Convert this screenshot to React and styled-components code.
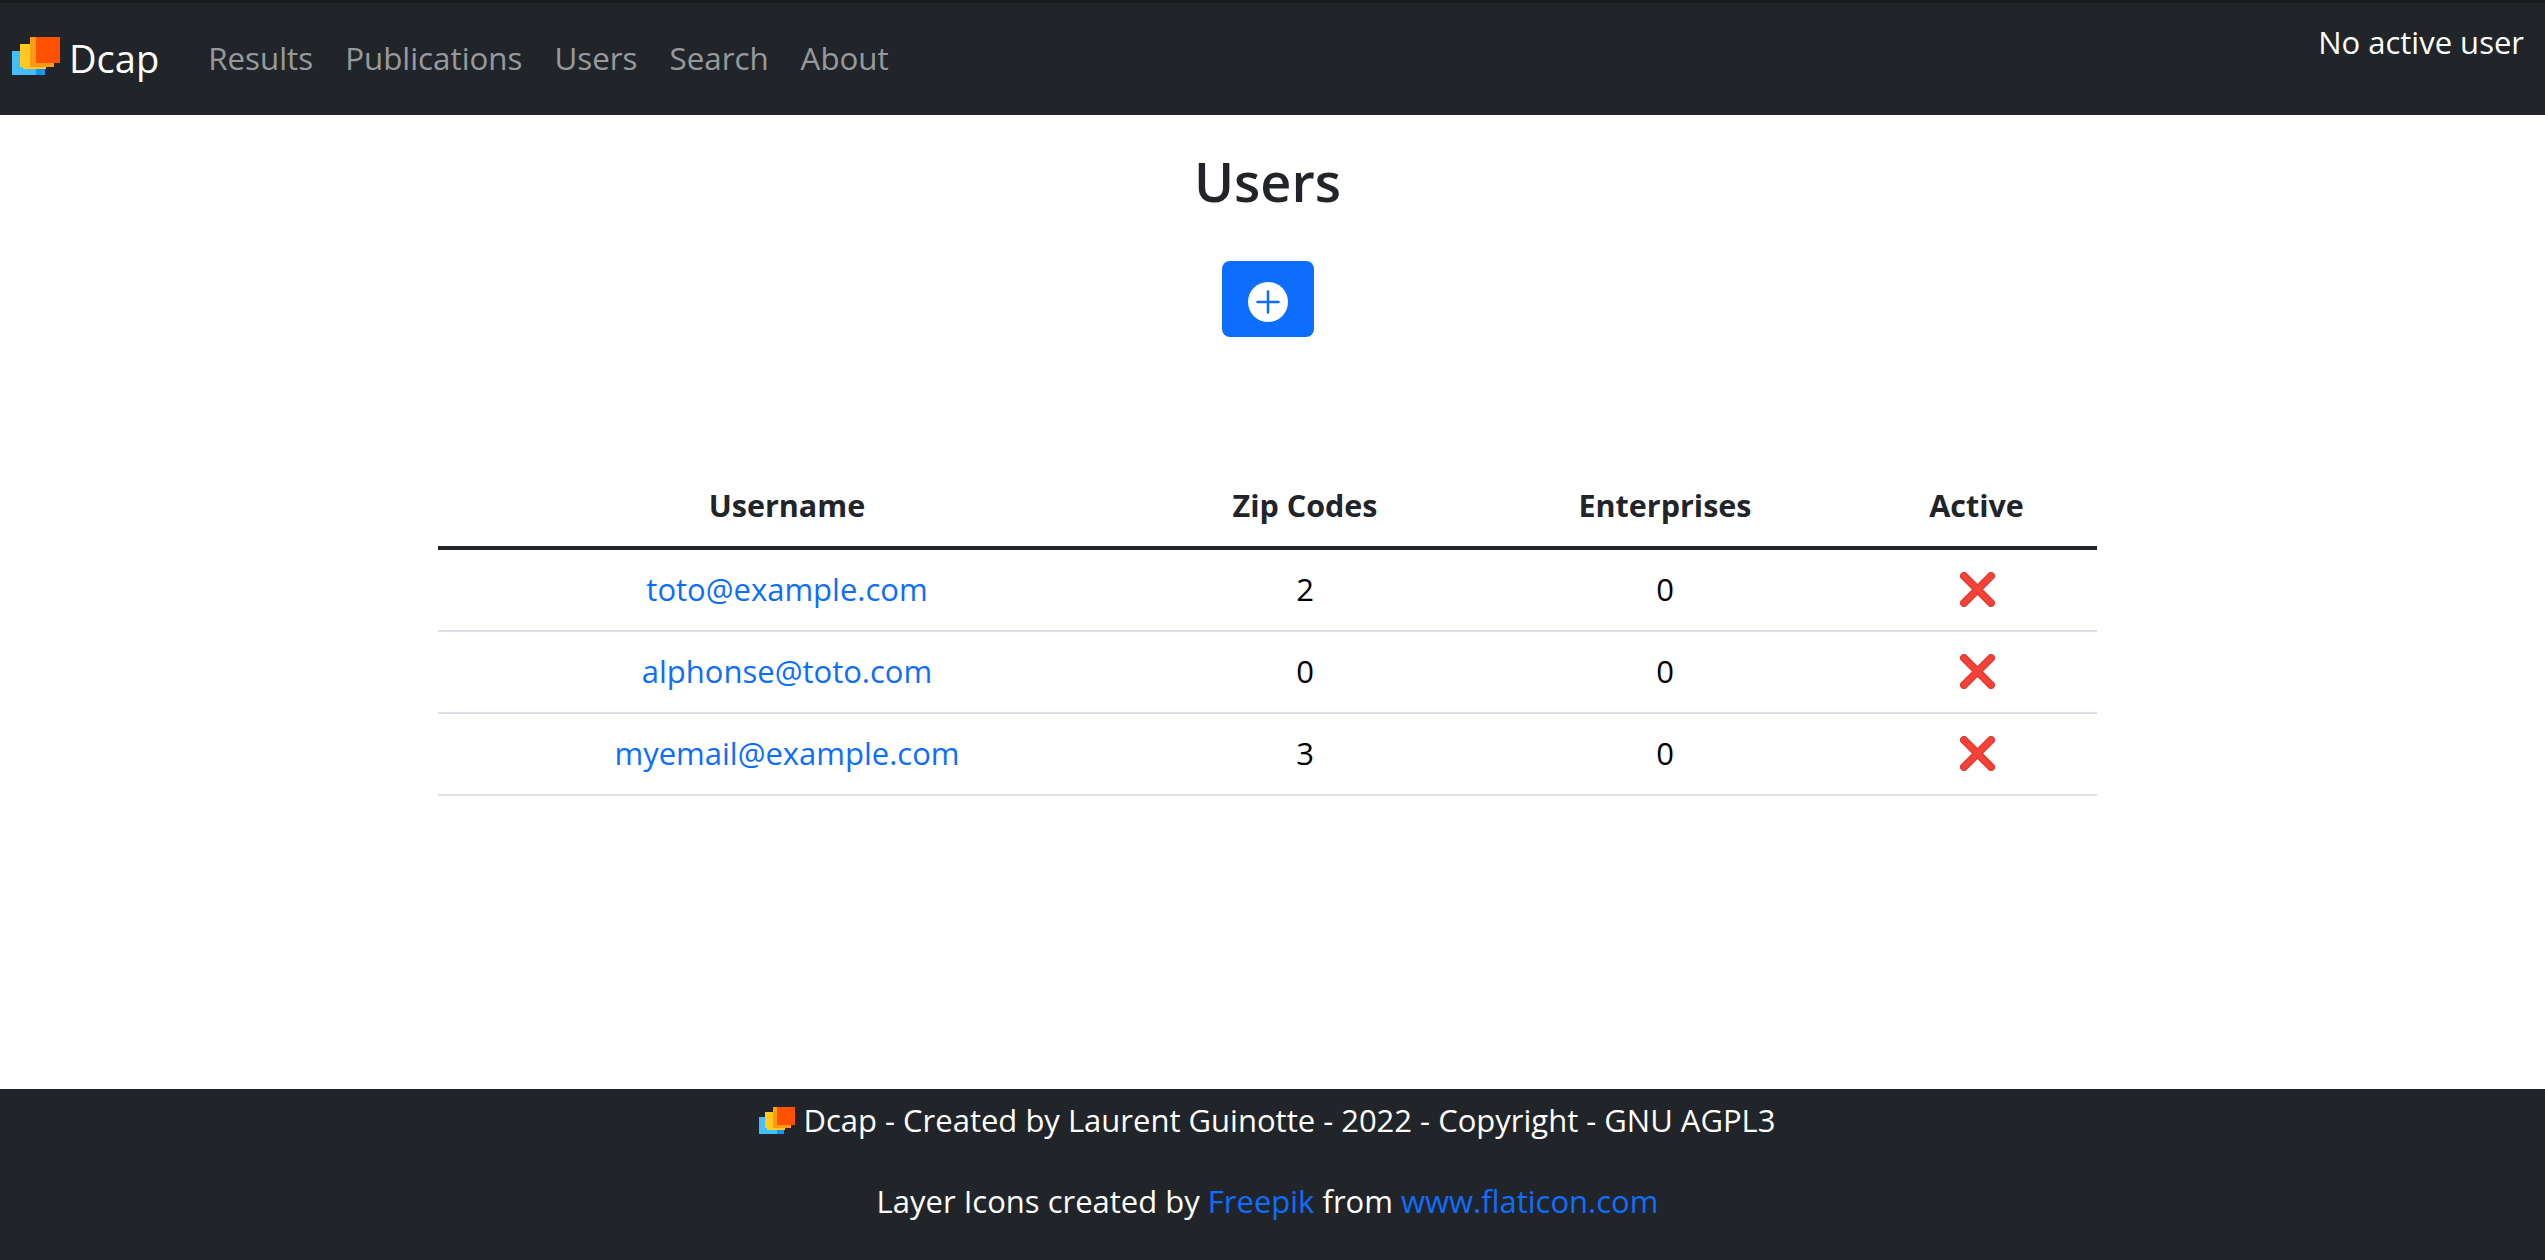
import React from "react";
import styled, { createGlobalStyle } from "styled-components";

const Global = createGlobalStyle`
  html, body { margin: 0; padding: 0; background: #fff; }
  body { font-family: "Open Sans", "Noto Sans", sans-serif; font-size: 31px; line-height: 48px; color: #212529; }
  #root { height: 1260px; display: flex; flex-direction: column; overflow: hidden; }
  a { text-decoration: none; }
`;

const Navbar = styled.nav`
  height: 115px; box-sizing: border-box; flex: none;
  background: #212529; border-top: 3px solid #1a1b1c;
  display: flex; align-items: flex-start; justify-content: space-between;
`;
const NavLeft = styled.div`display: flex; align-items: center; height: 109px;`;
const Brand = styled.a`
  display: flex; align-items: center; gap: 9px; margin-left: 12px; margin-right: 49px;
  color: #fff; font-size: 38px;
`;
const BrandMark = styled.span`display: flex; margin-top: -3px;`;
const NavLink = styled.a`
  color: rgba(255,255,255,.55); font-size: 31.3px; margin-right: 32px;
`;
const ActiveUser = styled.div`
  color: #fff; font-size: 31px; margin: 15px 21px 0 0;
`;
const Main = styled.main`
  flex: 1; display: flex; flex-direction: column; align-items: center; padding-right: 10px;
`;
const Title = styled.h1`
  margin: 34px 0 0; font-size: 54px; line-height: 64px; font-weight: 600; color: #212529;
`;
const AddButton = styled.button`
  margin-top: 48px; width: 92px; height: 76px; border: 0; border-radius: 8px;
  background: #0d6efd; display: flex; align-items: center; justify-content: center; padding: 5px 0 0;
`;
const UserTable = styled.table`
  width: 1659px; margin-top: 130px; border-collapse: collapse; table-layout: fixed; text-align: center;
`;
const Th = styled.th`
  font-size: 30.5px; font-weight: 700; height: 81px; padding: 0 0 4px; box-sizing: border-box;
  border-bottom: 4px solid #212529;
`;
const Td = styled.td`
  height: 78px; padding: 0 0 2px; border-bottom: 2px solid #dee2e6; color: #000;
`;
const UserLink = styled.a`color: #0d6efd;`;
const Footer = styled.footer`
  flex: none; height: 171px; box-sizing: border-box; padding: 7px 10px 0 0;
  background: #212529; color: #fff; text-align: center;
`;
const FooterLine = styled.p`
  margin: 0 0 33px; line-height: 48px; font-size: 31px;
  display: flex; justify-content: center; align-items: center; gap: 8px;
`;
const FooterCredit = styled.p`margin: 0; line-height: 48px; font-size: 31px;`;
const FooterLink = styled.a`color: #0d6efd;`;
const CrossIcon = styled.svg`display: block; margin: 1px auto 0; position: relative; left: 1px;`;
const LogoMark = styled.svg`filter: blur(0.5px);`;

const Logo = ({ width, height }) => (
  <LogoMark width={width} height={height} viewBox="0 0 48 38" preserveAspectRatio="none" shapeRendering="crispEdges">
    <rect x="0" y="14" width="30" height="24" fill="#45bffc" />
    <rect x="24" y="32" width="9" height="6" fill="#1a96f2" />
    <path fill="#ffc91f" d="M8 7h32v23h-6v2H11v-2H8z" />
    <path fill="#ff9a12" d="M18 0h30v26h-6v4H18z" />
    <rect x="24" y="0" width="24" height="26" fill="#ff5200" />
  </LogoMark>
);

const PlusCircle = () => (
  <svg width="40" height="40" viewBox="0 0 16 16" fill="#fff">
    <circle cx="8" cy="8" r="8" />
    <path d="M8 3.8v8.4M3.8 8h8.4" stroke="#0d6efd" strokeWidth="1" strokeLinecap="round" />
  </svg>
);

const Cross = () => (
  <CrossIcon width="35" height="35" viewBox="0 0 35 35">
    <path d="M4 4L31 31M31 4L4 31" stroke="#e53935" strokeWidth="8" strokeLinecap="round" />
    <path d="M4 4L31 31M31 4L4 31" stroke="#f44336" strokeWidth="5" strokeLinecap="round" />
  </CrossIcon>
);

const users = [
  ["toto@example.com", 2, 0],
  ["alphonse@toto.com", 0, 0],
  ["myemail@example.com", 3, 0],
];

export default function App() {
  return (
    <>
      <Global />
      <Navbar>
        <NavLeft>
          <Brand href="#"><BrandMark><Logo width={48} height={38} /></BrandMark>Dcap</Brand>
          {["Results", "Publications", "Users", "Search", "About"].map((l) => (
            <NavLink href="#" key={l}>{l}</NavLink>
          ))}
        </NavLeft>
        <ActiveUser>No active user</ActiveUser>
      </Navbar>
      <Main>
        <Title>Users</Title>
        <AddButton aria-label="Add"><PlusCircle /></AddButton>
        <UserTable>
          <colgroup>
            <col width="698" /><col width="338" /><col width="382" /><col width="241" />
          </colgroup>
          <thead>
            <tr><Th>Username</Th><Th>Zip Codes</Th><Th>Enterprises</Th><Th>Active</Th></tr>
          </thead>
          <tbody>
            {users.map(([u, z, e]) => (
              <tr key={u}>
                <Td><UserLink href="#">{u}</UserLink></Td>
                <Td>{z}</Td>
                <Td>{e}</Td>
                <Td><Cross /></Td>
              </tr>
            ))}
          </tbody>
        </UserTable>
      </Main>
      <Footer>
        <FooterLine><Logo width={36} height={27} />Dcap - Created by Laurent Guinotte - 2022 - Copyright - GNU AGPL3</FooterLine>
        <FooterCredit>Layer Icons created by <FooterLink href="#">Freepik</FooterLink> from <FooterLink href="#">www.flaticon.com</FooterLink></FooterCredit>
      </Footer>
    </>
  );
}
